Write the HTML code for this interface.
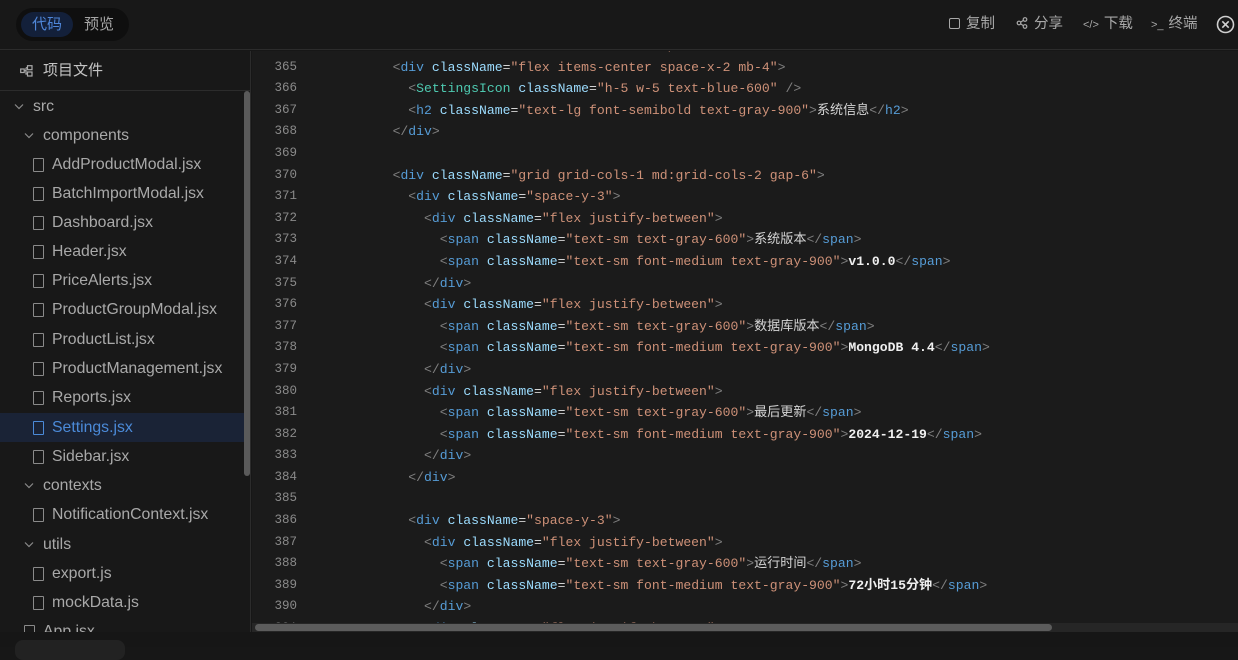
<!DOCTYPE html>
<html><head><meta charset="utf-8"><style>
*{margin:0;padding:0;box-sizing:border-box}
body{width:1238px;height:647px;overflow:hidden;background:#171717;font-family:"Liberation Sans","Noto Sans CJK SC",sans-serif;position:relative;color:#bdbdbd}
.top{position:absolute;left:0;top:0;width:1238px;height:50px;background:#181818;border-bottom:1px solid #2c2c2c}
.tabs{position:absolute;left:16px;top:8px;width:113px;height:33px;border-radius:17px;background:#0f0f0f}
.tab1{position:absolute;left:5px;top:4px;width:52px;height:25px;border-radius:13px;background:#13203a;color:#4f86d8;font-size:15px;text-align:center;line-height:25px}
.tab2{position:absolute;left:68px;top:4px;color:#a5a5a5;font-size:15px;line-height:25px}
.act{position:absolute;top:15px;font-size:14.5px;color:#a8a8a8;line-height:18px}
.side{position:absolute;left:0;top:51px;width:251px;height:581px;background:#181818;border-right:1px solid #2c2c2c;overflow:hidden}
.sh{height:40px;border-bottom:1px solid #2c2c2c;font-size:15px;color:#c4c4c4;padding-left:43px;line-height:40px;position:relative}
.it{position:absolute;left:0;width:244px;height:29px;font-size:15.8px;line-height:29px;color:#a9a9a9;white-space:nowrap}
.it.sel{background:#1a2336;color:#4b8ad8}
.fi{position:absolute;top:8px;width:11px;height:14px;border:1.5px solid #8a8a8a;border-radius:1px}
.sel .fi{border-color:#4b8ad8}
.ch{position:absolute;top:11px}
.vs{position:absolute;left:244px;top:40px;width:6px;height:385px;background:#5a5a5a;border-radius:3px}
.code{position:absolute;left:252px;top:51px;width:986px;height:581px;background:#1b1b1b;overflow:hidden}
.ln{position:absolute;left:0;width:45px;text-align:right;font-family:"Liberation Mono",monospace;font-size:12.5px;color:#8a8a8a}
pre{position:absolute;left:62px;top:-16px;font-family:"Liberation Mono","Noto Sans CJK SC",monospace;font-size:13.1px;line-height:21.6px;color:#d4d4d4}
.lnw{position:absolute;left:0;top:-16px;line-height:21.6px}
.t{color:#808080}.n{color:#569cd6}.a{color:#9cdcfe}.s{color:#ce9178}.c{color:#4ec9b0}.x{color:#f0f0f0;font-weight:bold}
.hs{position:absolute;left:252px;top:623px;width:986px;height:9px;background:#262626}
.hst{position:absolute;left:3px;top:1px;width:797px;height:7px;background:#5c5c5c;border-radius:4px}
.bot{position:absolute;left:0;top:632px;width:1238px;height:15px;background:#161616}
</style></head><body>
<div class="top">
 <div class="tabs"><div class="tab1">代码</div><div class="tab2">预览</div></div>
 <div class="act" style="left:949px"><span style="display:inline-block;width:11px;height:11px;border:1.5px solid #a8a8a8;border-radius:2px;margin-right:6px;vertical-align:-1px"></span>复制</div>
 <div class="act" style="left:1016px"><svg width="12" height="12" viewBox="0 0 12 12" style="margin-right:6px;vertical-align:-1px"><circle cx="3" cy="6" r="1.8" fill="none" stroke="#a8a8a8" stroke-width="1.2"/><circle cx="9" cy="2.5" r="1.8" fill="none" stroke="#a8a8a8" stroke-width="1.2"/><circle cx="9" cy="9.5" r="1.8" fill="none" stroke="#a8a8a8" stroke-width="1.2"/><path d="M4.5 5.2L7.5 3.3M4.5 6.8L7.5 8.7" stroke="#a8a8a8" stroke-width="1.2"/></svg>分享</div>
 <div class="act" style="left:1083px"><span style="font-size:11px;margin-right:5px">&lt;/&gt;</span>下载</div>
 <div class="act" style="left:1151px"><span style="font-size:11px;margin-right:5px">&gt;_</span>终端</div>
 <svg style="position:absolute;left:1216px;top:15px" width="19" height="19" viewBox="0 0 19 19"><circle cx="9.5" cy="9.5" r="8" fill="none" stroke="#d0d0d0" stroke-width="1.6"/><path d="M6.3 6.3L12.7 12.7M12.7 6.3L6.3 12.7" stroke="#d0d0d0" stroke-width="1.6"/></svg>
</div>
<div class="side">
 <div class="sh"><svg style="position:absolute;left:20px;top:14px" width="13" height="12" viewBox="0 0 13 12"><rect x="0.7" y="4" width="3.5" height="3.5" fill="none" stroke="#aaa" stroke-width="1.2"/><rect x="7.5" y="0.7" width="4.5" height="4" fill="none" stroke="#aaa" stroke-width="1.2"/><rect x="7.5" y="7" width="4.5" height="4" fill="none" stroke="#aaa" stroke-width="1.2"/><path d="M4.2 5.7H6M6 2.7V9H7.5M6 2.7H7.5" fill="none" stroke="#aaa" stroke-width="1.2"/></svg>项目文件</div>
 <div class="vs"></div>
 <div class="it" style="top:41px;padding-left:33px"><svg class="ch" style="left:14px" width="10" height="7" viewBox="0 0 10 7"><path d="M1 1.5L5 5.5L9 1.5" fill="none" stroke="#8a8a8a" stroke-width="1.2"/></svg>src</div>
 <div class="it" style="top:70px;padding-left:43px"><svg class="ch" style="left:24px" width="10" height="7" viewBox="0 0 10 7"><path d="M1 1.5L5 5.5L9 1.5" fill="none" stroke="#8a8a8a" stroke-width="1.2"/></svg>components</div>
 <div class="it" style="top:99px;padding-left:52px"><span class="fi" style="left:33px"></span>AddProductModal.jsx</div>
 <div class="it" style="top:128px;padding-left:52px"><span class="fi" style="left:33px"></span>BatchImportModal.jsx</div>
 <div class="it" style="top:157px;padding-left:52px"><span class="fi" style="left:33px"></span>Dashboard.jsx</div>
 <div class="it" style="top:186px;padding-left:52px"><span class="fi" style="left:33px"></span>Header.jsx</div>
 <div class="it" style="top:215px;padding-left:52px"><span class="fi" style="left:33px"></span>PriceAlerts.jsx</div>
 <div class="it" style="top:244px;padding-left:52px"><span class="fi" style="left:33px"></span>ProductGroupModal.jsx</div>
 <div class="it" style="top:274px;padding-left:52px"><span class="fi" style="left:33px"></span>ProductList.jsx</div>
 <div class="it" style="top:303px;padding-left:52px"><span class="fi" style="left:33px"></span>ProductManagement.jsx</div>
 <div class="it" style="top:332px;padding-left:52px"><span class="fi" style="left:33px"></span>Reports.jsx</div>
 <div class="it sel" style="top:362px;padding-left:52px"><span class="fi" style="left:33px"></span>Settings.jsx</div>
 <div class="it" style="top:391px;padding-left:52px"><span class="fi" style="left:33px"></span>Sidebar.jsx</div>
 <div class="it" style="top:420px;padding-left:43px"><svg class="ch" style="left:24px" width="10" height="7" viewBox="0 0 10 7"><path d="M1 1.5L5 5.5L9 1.5" fill="none" stroke="#8a8a8a" stroke-width="1.2"/></svg>contexts</div>
 <div class="it" style="top:449px;padding-left:52px"><span class="fi" style="left:33px"></span>NotificationContext.jsx</div>
 <div class="it" style="top:479px;padding-left:43px"><svg class="ch" style="left:24px" width="10" height="7" viewBox="0 0 10 7"><path d="M1 1.5L5 5.5L9 1.5" fill="none" stroke="#8a8a8a" stroke-width="1.2"/></svg>utils</div>
 <div class="it" style="top:508px;padding-left:52px"><span class="fi" style="left:33px"></span>export.js</div>
 <div class="it" style="top:537px;padding-left:52px"><span class="fi" style="left:33px"></span>mockData.js</div>
 <div class="it" style="top:566px;padding-left:43px"><span class="fi" style="left:24px"></span>App.jsx</div>
</div>
<div class="code">
<div class="ln lnw">364<br>365<br>366<br>367<br>368<br>369<br>370<br>371<br>372<br>373<br>374<br>375<br>376<br>377<br>378<br>379<br>380<br>381<br>382<br>383<br>384<br>385<br>386<br>387<br>388<br>389<br>390<br>391</div>
<pre>          <span class="t">&lt;</span><span class="n">div</span> <span class="a">className</span>=<span class="s">"flex items-center space-x-2 mb-4"</span><span class="t">&gt;</span>
          <span class="t">&lt;</span><span class="n">div</span> <span class="a">className</span>=<span class="s">"flex items-center space-x-2 mb-4"</span><span class="t">&gt;</span>
            <span class="t">&lt;</span><span class="c">SettingsIcon</span> <span class="a">className</span>=<span class="s">"h-5 w-5 text-blue-600"</span> <span class="t">/&gt;</span>
            <span class="t">&lt;</span><span class="n">h2</span> <span class="a">className</span>=<span class="s">"text-lg font-semibold text-gray-900"</span><span class="t">&gt;</span>系统信息<span class="t">&lt;/</span><span class="n">h2</span><span class="t">&gt;</span>
          <span class="t">&lt;/</span><span class="n">div</span><span class="t">&gt;</span>

          <span class="t">&lt;</span><span class="n">div</span> <span class="a">className</span>=<span class="s">"grid grid-cols-1 md:grid-cols-2 gap-6"</span><span class="t">&gt;</span>
            <span class="t">&lt;</span><span class="n">div</span> <span class="a">className</span>=<span class="s">"space-y-3"</span><span class="t">&gt;</span>
              <span class="t">&lt;</span><span class="n">div</span> <span class="a">className</span>=<span class="s">"flex justify-between"</span><span class="t">&gt;</span>
                <span class="t">&lt;</span><span class="n">span</span> <span class="a">className</span>=<span class="s">"text-sm text-gray-600"</span><span class="t">&gt;</span>系统版本<span class="t">&lt;/</span><span class="n">span</span><span class="t">&gt;</span>
                <span class="t">&lt;</span><span class="n">span</span> <span class="a">className</span>=<span class="s">"text-sm font-medium text-gray-900"</span><span class="t">&gt;</span><span class="x">v1.0.0</span><span class="t">&lt;/</span><span class="n">span</span><span class="t">&gt;</span>
              <span class="t">&lt;/</span><span class="n">div</span><span class="t">&gt;</span>
              <span class="t">&lt;</span><span class="n">div</span> <span class="a">className</span>=<span class="s">"flex justify-between"</span><span class="t">&gt;</span>
                <span class="t">&lt;</span><span class="n">span</span> <span class="a">className</span>=<span class="s">"text-sm text-gray-600"</span><span class="t">&gt;</span>数据库版本<span class="t">&lt;/</span><span class="n">span</span><span class="t">&gt;</span>
                <span class="t">&lt;</span><span class="n">span</span> <span class="a">className</span>=<span class="s">"text-sm font-medium text-gray-900"</span><span class="t">&gt;</span><span class="x">MongoDB 4.4</span><span class="t">&lt;/</span><span class="n">span</span><span class="t">&gt;</span>
              <span class="t">&lt;/</span><span class="n">div</span><span class="t">&gt;</span>
              <span class="t">&lt;</span><span class="n">div</span> <span class="a">className</span>=<span class="s">"flex justify-between"</span><span class="t">&gt;</span>
                <span class="t">&lt;</span><span class="n">span</span> <span class="a">className</span>=<span class="s">"text-sm text-gray-600"</span><span class="t">&gt;</span>最后更新<span class="t">&lt;/</span><span class="n">span</span><span class="t">&gt;</span>
                <span class="t">&lt;</span><span class="n">span</span> <span class="a">className</span>=<span class="s">"text-sm font-medium text-gray-900"</span><span class="t">&gt;</span><span class="x">2024-12-19</span><span class="t">&lt;/</span><span class="n">span</span><span class="t">&gt;</span>
              <span class="t">&lt;/</span><span class="n">div</span><span class="t">&gt;</span>
            <span class="t">&lt;/</span><span class="n">div</span><span class="t">&gt;</span>

            <span class="t">&lt;</span><span class="n">div</span> <span class="a">className</span>=<span class="s">"space-y-3"</span><span class="t">&gt;</span>
              <span class="t">&lt;</span><span class="n">div</span> <span class="a">className</span>=<span class="s">"flex justify-between"</span><span class="t">&gt;</span>
                <span class="t">&lt;</span><span class="n">span</span> <span class="a">className</span>=<span class="s">"text-sm text-gray-600"</span><span class="t">&gt;</span>运行时间<span class="t">&lt;/</span><span class="n">span</span><span class="t">&gt;</span>
                <span class="t">&lt;</span><span class="n">span</span> <span class="a">className</span>=<span class="s">"text-sm font-medium text-gray-900"</span><span class="t">&gt;</span><span class="x">72小时15分钟</span><span class="t">&lt;/</span><span class="n">span</span><span class="t">&gt;</span>
              <span class="t">&lt;/</span><span class="n">div</span><span class="t">&gt;</span>
              <span class="t">&lt;</span><span class="n">div</span> <span class="a">className</span>=<span class="s">"flex justify-between"</span><span class="t">&gt;</span></pre>
</div>
<div class="hs"><div class="hst"></div></div>
<div class="bot"><div style="position:absolute;left:15px;top:8px;width:110px;height:20px;border-radius:8px;background:#222"></div></div>
</body></html>
